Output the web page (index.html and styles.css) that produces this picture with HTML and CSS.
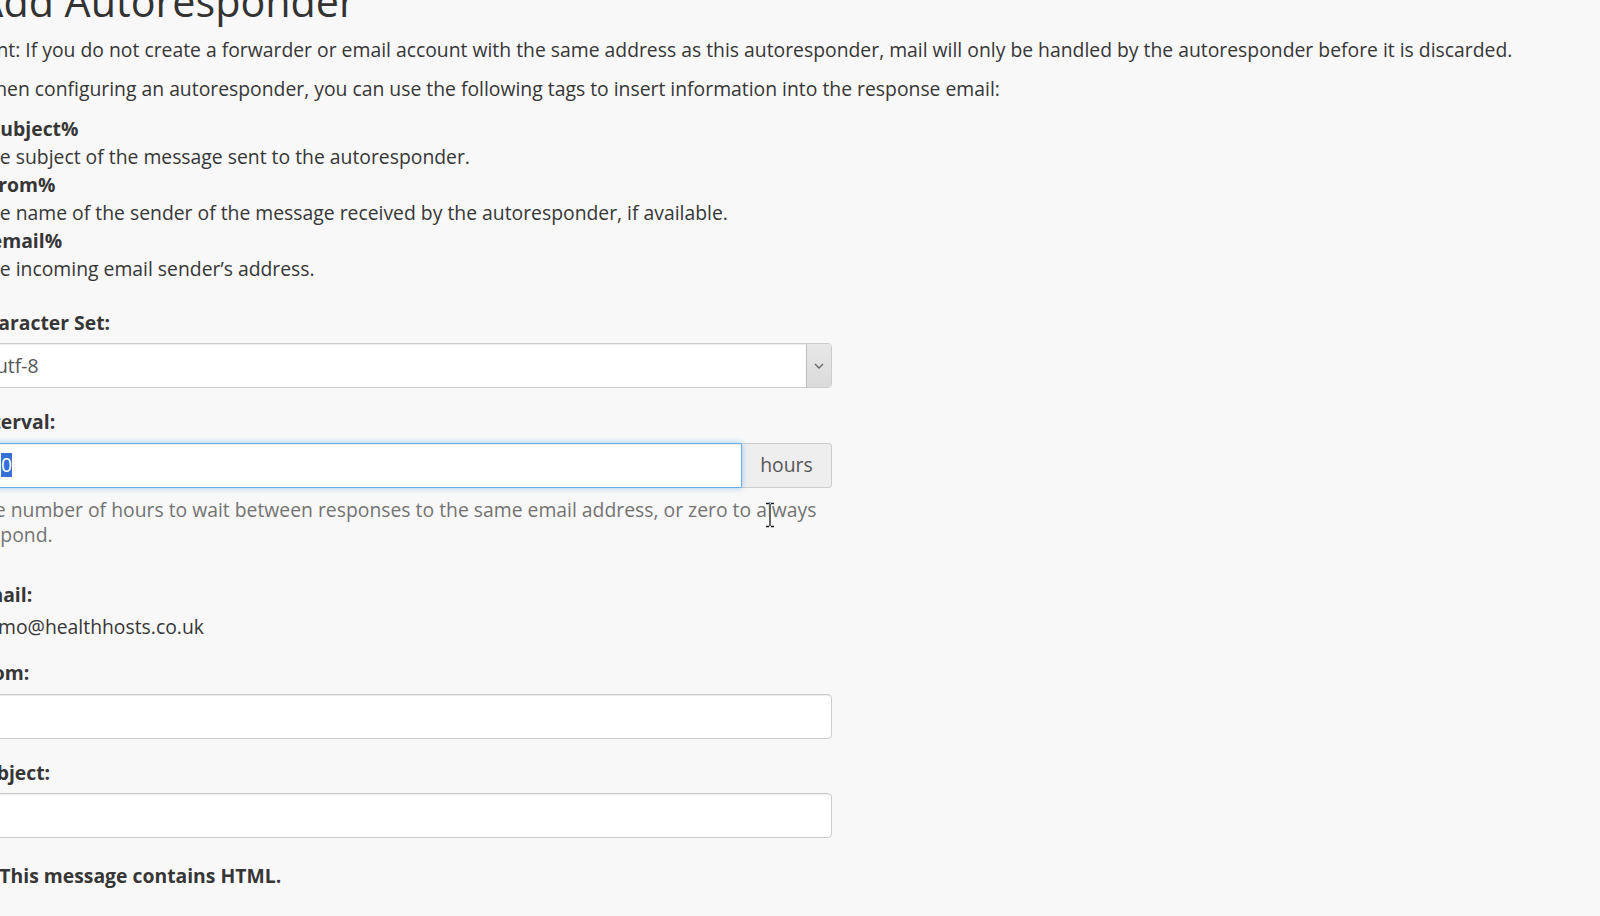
FILE: index.html
```html
<!DOCTYPE html>
<html lang="en">
<head>
<meta charset="utf-8">
<title>Add Autoresponder</title>
<link rel="stylesheet" href="styles.css">
</head>
<body>
<div class="page">
  <h1 class="title">Add Autoresponder</h1>
  <p class="para">Hint: If you do not create a forwarder or email account with the same address as this autoresponder, mail will only be handled by the autoresponder before it is discarded.</p>
  <p class="para">When configuring an autoresponder, you can use the following tags to insert information into the response email:</p>
  <dl class="tags">
    <dt>%subject%</dt>
    <dd>The subject of the message sent to the autoresponder.</dd>
    <dt>%from%</dt>
    <dd>The name of the sender of the message received by the autoresponder, if available.</dd>
    <dt>%email%</dt>
    <dd>The incoming email sender’s address.</dd>
  </dl>

  <div class="group">
    <label class="label">Character Set:</label>
    <div class="select">
      <span class="select-value">utf-8</span>
      <span class="select-btn">
        <svg width="10" height="6" viewBox="0 0 10 6"><path d="M1 1 L5 5 L9 1" fill="none" stroke="#666" stroke-width="1.3"/></svg>
      </span>
    </div>
  </div>

  <div class="group">
    <label class="label">Interval:</label>
    <div class="input-group">
      <div class="input focus"><span class="sel">0</span></div>
      <span class="addon">hours</span>
    </div>
    <p class="help">The number of hours to wait between responses to the same email address, or zero to always respond.</p>
  </div>

  <div class="group">
    <label class="label">Email:</label>
    <div class="static">demo@healthhosts.co.uk</div>
  </div>

  <div class="group">
    <label class="label">From:</label>
    <div class="input"></div>
  </div>

  <div class="group">
    <label class="label">Subject:</label>
    <div class="input"></div>
  </div>

  <div class="checkbox">
    <span class="box"></span>
    <span class="check-text">This message contains HTML.</span>
  </div>
</div>

<svg class="ibeam" width="10" height="26" viewBox="0 0 10 26">
  <path d="M1 1.5 H4 M6 1.5 H9 M5 2 V24 M1 24.5 H4 M6 24.5 H9" stroke="#fff" stroke-width="3" fill="none"/>
  <path d="M1 1.5 H4 M6 1.5 H9 M5 2 V24 M1 24.5 H4 M6 24.5 H9" stroke="#111" stroke-width="1.3" fill="none"/>
</svg>
</body>
</html>
```
FILE: styles.css
```css
html, body {
  margin: 0;
  padding: 0;
  background: #f8f8f8;
  overflow: hidden;
}

body {
  font-family: "Open Sans", "DejaVu Sans", sans-serif;
  font-size: 19.35px;
  line-height: 27.5px;
  color: #363636;
  width: 1600px;
  height: 916px;
  position: relative;
}

.page {
  margin-left: -22.7px;
  width: 854.7px;
}

.title {
  font-size: 41.25px;
  font-weight: 400;
  line-height: 44px;
  margin: -21px 0 12.5px 0;
  color: #333;
  white-space: nowrap;
}

.para {
  margin: 0 0 12.3px 0;
  white-space: nowrap;
}

.tags {
  margin: 0 0 26px 0;
  line-height: 27.9px;
  white-space: nowrap;
}

.tags dt {
  font-weight: 700;
  margin-left: -4px;
}

.tags dd {
  margin: 0;
}

.group {
  margin-bottom: 20px;
}

.label {
  display: block;
  font-weight: 700;
  margin: 0 0 7px -4px;
}

.select {
  display: flex;
  align-items: stretch;
  height: 45px;
  box-sizing: border-box;
  background: #fff;
  border: 1px solid #ccc;
  border-radius: 4px;
  box-shadow: inset 0 1px 1px rgba(0, 0, 0, 0.075);
}

.select-value {
  flex: 1;
  display: flex;
  align-items: center;
  padding-left: 17.7px;
  color: #555;
}

.select-btn {
  width: 24px;
  display: flex;
  align-items: center;
  justify-content: center;
  background: linear-gradient(#e8e8e8, #dadada);
  border-left: 1px solid #bdbdbd;
  border-radius: 0 3px 3px 0;
}

.input-group {
  display: flex;
  height: 45px;
}

.input {
  flex: 1;
  height: 45px;
  box-sizing: border-box;
  background: #fff;
  border: 1px solid #ccc;
  border-radius: 4px;
  box-shadow: inset 0 1px 1px rgba(0, 0, 0, 0.075);
  display: flex;
  align-items: center;
  padding-left: 22.7px;
}

.input-group .input {
  border-radius: 4px 0 0 4px;
}

.input.focus {
  border-color: #66afe9;
  box-shadow: inset 0 1px 1px rgba(0, 0, 0, 0.075), 0 0 6px rgba(102, 175, 233, 0.6);
  position: relative;
  z-index: 1;
}

.sel {
  display: inline-block;
  line-height: 24px;
  background: #3470d6;
  color: #fff;
}

.addon {
  width: 90px;
  box-sizing: border-box;
  display: flex;
  align-items: center;
  justify-content: center;
  background: #eee;
  border: 1px solid #ccc;
  border-left: 0;
  border-radius: 0 4px 4px 0;
  color: #555;
}

.help {
  margin: 9px 0 0 -5px;
  padding-bottom: 14px;
  line-height: 25px;
  color: #737373;
}

.static {
  line-height: 24px;
  margin-left: -2px;
}

.checkbox {
  display: flex;
  align-items: center;
  margin-top: 23.5px;
  font-weight: 700;
}

.box {
  width: 17px;
  height: 17px;
  box-sizing: border-box;
  border: 1px solid #999;
  border-radius: 3px;
  background: #fff;
  margin-right: 5px;
}

.ibeam {
  position: absolute;
  left: 765px;
  top: 502px;
}
```
